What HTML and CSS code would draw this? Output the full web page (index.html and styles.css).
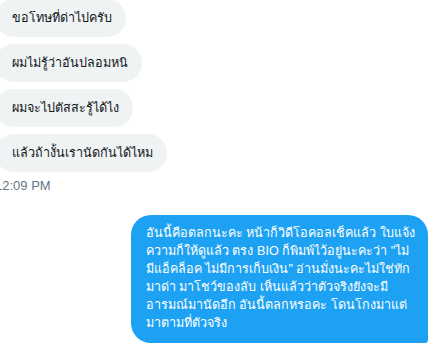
FILE: index.html
```html
<!DOCTYPE HTML>
<html>
<head>
    <title>Messages</title>
    <link rel="stylesheet" href="styles.css">
</head>
<body>
<div class="chat">
    <div class="bubble in">ขอโทษที่ด่าไปครับ</div>
    <div class="bubble in">ผมไม่รู้ว่าอันปลอมหนิ</div>
    <div class="bubble in">ผมจะไปตัสสะรู้ได้ไง</div>
    <div class="bubble in">แล้วถ้างั้นเรานัดกันได้ไหม</div>
    <div class="time">12:09 PM</div>
    <div class="bubble out">
        <span class="line">อันนี้คือตลกนะคะ หน้าก็วิดีโอคอลเช็คแล้ว ใบแจ้ง</span>
        <span class="line">ความก็ให้ดูแล้ว ตรง BIO ก็พิมพ์ไว้อยู่นะคะว่า "ไม่</span>
        <span class="line">มีแอ็คล็อค ไม่มีการเก็บเงิน" อ่านมั่งนะคะไม่ใช่ทัก</span>
        <span class="line">มาด่า มาโชว์ของลับ เห็นแล้วว่าตัวจริงยังจะมี</span>
        <span class="line">อารมณ์มานัดอีก อันนี้ตลกหรอคะ โดนโกงมาแต่</span>
        <span class="line">มาตามที่ตัวจริง</span>
    </div>
</div>
</body>
</html>
```

FILE: styles.css
```css
body {
    margin: 0;
    background-color: #fff;
    font-family: "Liberation Sans", "Noto Sans", sans-serif;
}

.chat {
    display: flex;
    flex-direction: column;
    align-items: flex-start;
    margin-left: -5px;
    margin-top: -1px;
}

.bubble {
    font-size: 12.6px;
    line-height: 18px;
}

.in {
    background-color: #eff3f4;
    color: #14171a;
    border-radius: 19px;
    padding: 10px 14px 10px 17px;
    margin-bottom: 7px;
}

.time {
    margin-top: -1px;
    font-size: 13px;
    line-height: 16px;
    color: #657786;
}

.out {
    align-self: flex-end;
    margin-top: 21px;
    margin-right: 5px;
    width: 267px;
    padding: 9px 15px 11px 15px;
    background-color: #1da1f2;
    color: #fff;
    border-radius: 20px 20px 3px 20px;
}

.line {
    display: block;
    white-space: nowrap;
}
```
